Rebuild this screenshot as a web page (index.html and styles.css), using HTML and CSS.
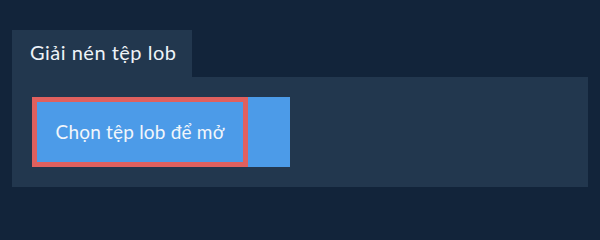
FILE: index.html
```html
<!DOCTYPE html>
<html lang="vi">
<head>
<meta charset="utf-8">
<link rel="stylesheet" href="styles.css">
</head>
<body>
<div class="page">
  <div class="tab">Giải nén tệp lob</div>
  <div class="panel">
    <div class="dropzone">
      <button class="choose">Chọn tệp lob để mở</button>
    </div>
  </div>
</div>
</body>
</html>
```
FILE: styles.css
```css
html, body {
  margin: 0;
  padding: 0;
  background: #12243a;
}
.page {
  padding: 30px 12px 0 12px;
  font-family: "Lato", sans-serif;
  color: #eef3f8;
}
.tab {
  display: inline-block;
  box-sizing: border-box;
  width: 180px;
  height: 47px;
  padding: 6px 0 0 18px;
  background: #22374e;
  font-size: 20px;
  letter-spacing: 0.5px;
  line-height: 32px;
}
.panel {
  background: #22374e;
  height: 110px;
  box-sizing: border-box;
  padding: 20px;
}
.dropzone {
  display: flex;
  width: 258px;
  height: 70px;
  background: #4c9be8;
}
.choose {
  box-sizing: border-box;
  width: 216px;
  height: 70px;
  border: 5px solid #e0605e;
  background: #4c9be8;
  color: #f2f6fb;
  font-family: "Lato", sans-serif;
  font-size: 19px;
  letter-spacing: 0.2px;
  padding: 0 0 2px 0;
  margin: 0;
  cursor: pointer;
}
```
